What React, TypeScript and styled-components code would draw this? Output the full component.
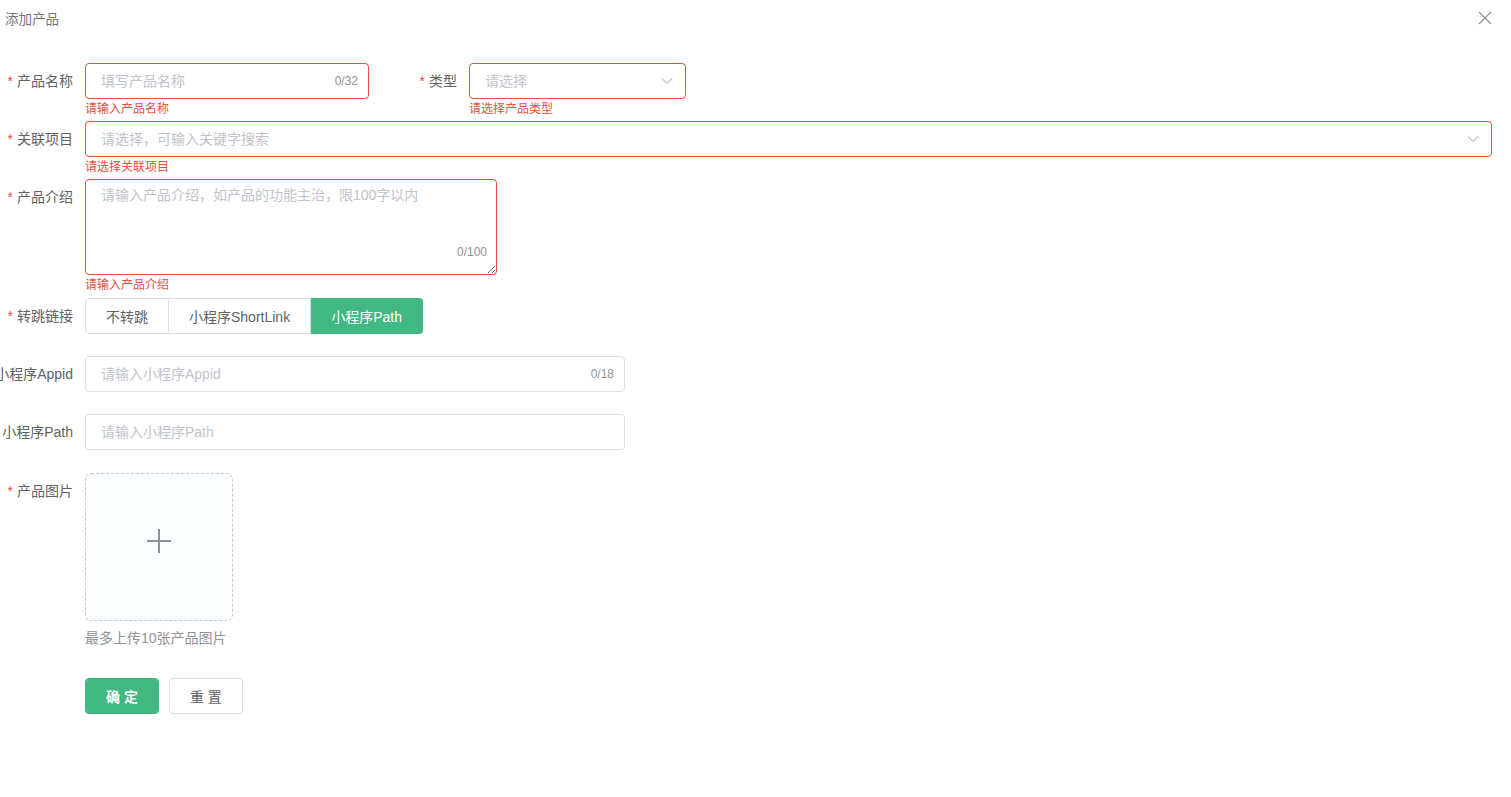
import React from 'react';
import styled, {createGlobalStyle} from 'styled-components';

const GlobalStyle = createGlobalStyle`
    html, body {
        margin: 0;
        padding: 0;
        background: #fff;
    }
    body {
        font-family: "Liberation Sans", "Noto Sans CJK SC", sans-serif;
        font-size: 14px;
        color: #606266;
    }
    * {
        box-sizing: border-box;
    }
`

const RED = '#f04d3a';
const GREEN = '#42b883';

const Drawer = styled.div`
    width: 1511px;
    min-height: 797px;
    background: #fff;
`

const Header = styled.header`
    display: flex;
    align-items: center;
    justify-content: space-between;
    height: 36px;
    padding: 0 19px 0 5px;
`

const Title = styled.span`
    font-size: 13.5px;
    color: #72767b;
`

const CloseButton = styled.button`
    border: none;
    background: none;
    padding: 0;
    width: 14px;
    height: 14px;
    display: flex;
    color: #909399;
    cursor: pointer;
`

const Form = styled.form`
    padding: 27px 19px 0 0;
`

const Row = styled.div`
    display: flex;
`

const Item = styled.div<{ $gapRight?: number; $gapBottom?: number }>`
    display: flex;
    position: relative;
    margin-bottom: ${p => p.$gapBottom ?? 22}px;
    margin-right: ${p => p.$gapRight ?? 0}px;
`

const FullItem = styled(Item)`
    flex: 1;
`

const Label = styled.label`
    flex: 0 0 85px;
    width: 85px;
    display: flex;
    justify-content: flex-end;
    padding-right: 12px;
    height: 36px;
    line-height: 36px;
    white-space: nowrap;
    color: #606266;
`

const Star = styled.span`
    color: ${RED};
    margin-right: 4px;
`

const Content = styled.div<{ $width?: number }>`
    position: relative;
    width: ${p => (p.$width ? `${p.$width}px` : 'auto')};
    flex: ${p => (p.$width ? '0 0 auto' : '1')};
`

const Box = styled.div<{ $error?: boolean }>`
    position: relative;
    display: flex;
    align-items: center;
    height: 36px;
    border: 1px solid ${p => (p.$error ? RED : '#dcdfe6')};
    border-radius: 4px;
    padding: 0 15px;
    background: #fff;
`

const TextInput = styled.input`
    flex: 1;
    min-width: 0;
    border: none;
    outline: none;
    font: inherit;
    font-size: 14px;
    color: #606266;
    padding: 0;
    background: transparent;

    &::placeholder {
        color: #c0c4cc;
    }
`

const Count = styled.span<{ $bottom?: boolean }>`
    font-size: 12px;
    color: #909399;
    margin-left: 8px;
    margin-right: -5px;
    ${p => p.$bottom && `
        position: absolute;
        right: 10px;
        bottom: 16px;
        margin: 0;
    `}
`

const Arrow = styled.span`
    display: flex;
    color: #c0c4cc;
    margin-right: -3px;
`

const ErrorText = styled.div`
    position: absolute;
    left: 0;
    top: 100%;
    padding-top: 2px;
    font-size: 12px;
    line-height: 16px;
    color: ${RED};
    white-space: nowrap;
`

const TextArea = styled.textarea<{ $error?: boolean }>`
    display: block;
    width: 412px;
    height: 96px;
    border: 1px solid ${p => (p.$error ? RED : '#dcdfe6')};
    border-radius: 4px;
    padding: 5px 15px;
    font: inherit;
    font-size: 14px;
    line-height: 1.5;
    color: #606266;
    resize: vertical;
    outline: none;

    &::placeholder {
        color: #c0c4cc;
    }
`

const RadioGroup = styled.div`
    display: flex;
`

const RadioButton = styled.button<{ $active?: boolean }>`
    height: 36px;
    padding: 0 20px;
    font: inherit;
    font-size: 14px;
    border: 1px solid ${p => (p.$active ? GREEN : '#dcdfe6')};
    border-left-width: 0;
    background: ${p => (p.$active ? GREEN : '#fff')};
    color: ${p => (p.$active ? '#fff' : '#606266')};
    cursor: pointer;

    &:first-child {
        border-left-width: 1px;
        border-radius: 4px 0 0 4px;
    }
    &:last-child {
        border-radius: 0 4px 4px 0;
    }
`

const Upload = styled.div`
    width: 148px;
    height: 148px;
    border: 1px dashed #c0ccda;
    border-radius: 6px;
    background: #fbfdff;
    display: flex;
    align-items: center;
    justify-content: center;
    padding-bottom: 12px;
    color: #8c939d;
    cursor: pointer;
`

const Tip = styled.div`
    line-height: 35px;
    font-size: 14px;
    color: #909399;
`

const Actions = styled.div`
    display: flex;
    gap: 10px;
    padding-left: 85px;
`

const Button = styled.button<{ $primary?: boolean }>`
    height: 36px;
    padding: 0 20px;
    border-radius: 4px;
    font: inherit;
    font-size: 14px;
    font-weight: ${p => (p.$primary ? 600 : 400)};
    border: 1px solid ${p => (p.$primary ? GREEN : '#dcdfe6')};
    background: ${p => (p.$primary ? GREEN : '#fff')};
    color: ${p => (p.$primary ? '#fff' : '#606266')};
    cursor: pointer;
`

const Chevron = () => (
    <svg width="12" height="12" viewBox="0 0 12 12" fill="none">
        <path d="M1 3.5 6 8.5 11 3.5" stroke="currentColor" strokeWidth="1.1"/>
    </svg>
);

const App = () => (
    <>
        <GlobalStyle/>
        <Drawer>
            <Header>
                <Title>添加产品</Title>
                <CloseButton type="button" aria-label="close">
                    <svg width="14" height="14" viewBox="0 0 14 14" fill="none">
                        <path d="M1 1 13 13M13 1 1 13" stroke="currentColor" strokeWidth="1.3"/>
                    </svg>
                </CloseButton>
            </Header>

            <Form onSubmit={e => e.preventDefault()}>
                <Row>
                    <Item $gapRight={15}>
                        <Label><Star>*</Star>产品名称</Label>
                        <Content $width={284}>
                            <Box $error>
                                <TextInput placeholder="填写产品名称"/>
                                <Count>0/32</Count>
                            </Box>
                            <ErrorText>请输入产品名称</ErrorText>
                        </Content>
                    </Item>
                    <Item>
                        <Label><Star>*</Star>类型</Label>
                        <Content $width={217}>
                            <Box $error>
                                <TextInput placeholder="请选择" readOnly/>
                                <Arrow><Chevron/></Arrow>
                            </Box>
                            <ErrorText>请选择产品类型</ErrorText>
                        </Content>
                    </Item>
                </Row>

                <FullItem>
                    <Label><Star>*</Star>关联项目</Label>
                    <Content>
                        <Box $error>
                            <TextInput placeholder="请选择，可输入关键字搜索"/>
                            <Arrow><Chevron/></Arrow>
                        </Box>
                        <ErrorText>请选择关联项目</ErrorText>
                    </Content>
                </FullItem>

                <Item $gapBottom={23}>
                    <Label><Star>*</Star>产品介绍</Label>
                    <Content $width={412}>
                        <TextArea $error placeholder="请输入产品介绍，如产品的功能主治，限100字以内"/>
                        <Count $bottom>0/100</Count>
                        <ErrorText>请输入产品介绍</ErrorText>
                    </Content>
                </Item>

                <Item>
                    <Label><Star>*</Star>转跳链接</Label>
                    <Content>
                        <RadioGroup>
                            <RadioButton type="button">不转跳</RadioButton>
                            <RadioButton type="button">小程序ShortLink</RadioButton>
                            <RadioButton type="button" $active>小程序Path</RadioButton>
                        </RadioGroup>
                    </Content>
                </Item>

                <Item>
                    <Label>小程序Appid</Label>
                    <Content $width={540}>
                        <Box>
                            <TextInput placeholder="请输入小程序Appid"/>
                            <Count>0/18</Count>
                        </Box>
                    </Content>
                </Item>

                <Item $gapBottom={23}>
                    <Label>小程序Path</Label>
                    <Content $width={540}>
                        <Box>
                            <TextInput placeholder="请输入小程序Path"/>
                        </Box>
                    </Content>
                </Item>

                <Item>
                    <Label><Star>*</Star>产品图片</Label>
                    <Content>
                        <Upload>
                            <svg width="26" height="26" viewBox="0 0 26 26" fill="none">
                                <path d="M13 1v24M1 13h24" stroke="currentColor" strokeWidth="2"/>
                            </svg>
                        </Upload>
                        <Tip>最多上传10张产品图片</Tip>
                    </Content>
                </Item>

                <Actions>
                    <Button type="submit" $primary>确 定</Button>
                    <Button type="button">重 置</Button>
                </Actions>
            </Form>
        </Drawer>
    </>
);

export default App;
